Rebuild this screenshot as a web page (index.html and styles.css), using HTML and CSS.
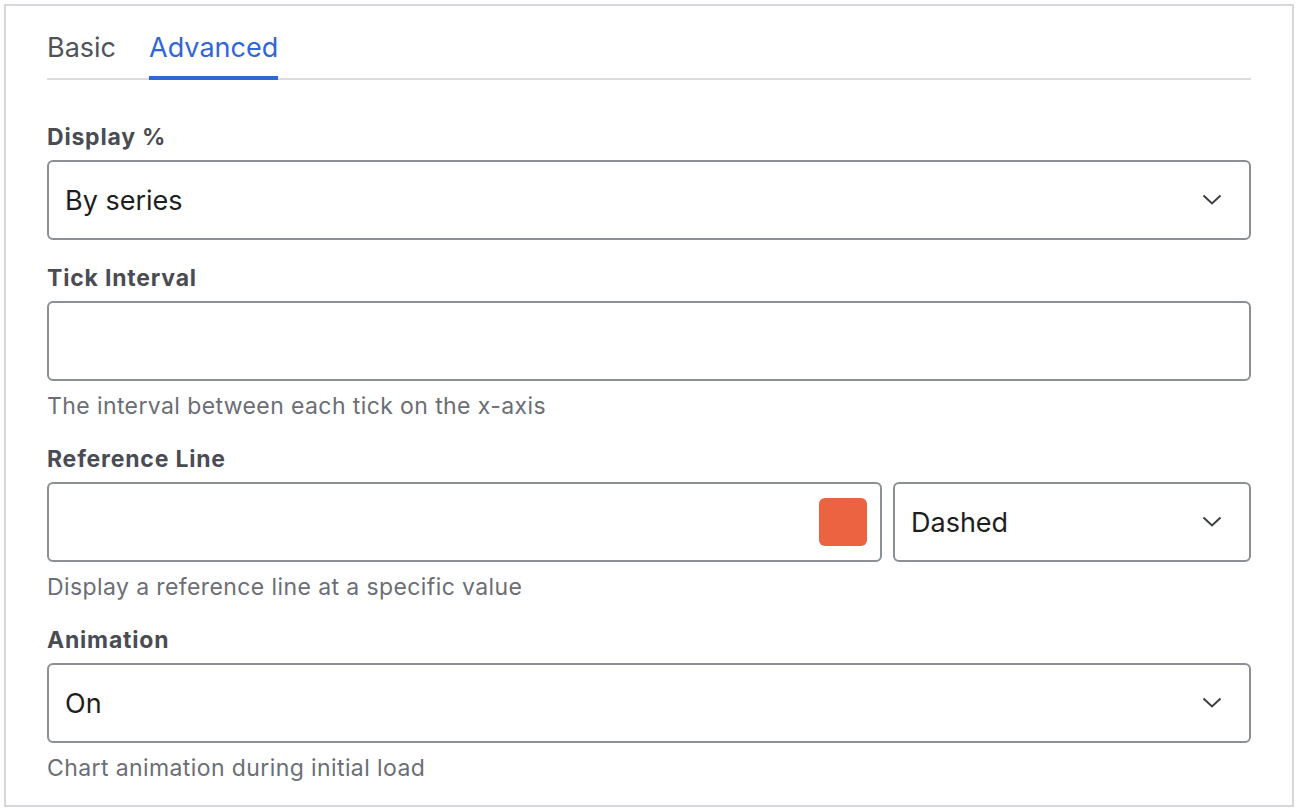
FILE: index.html
```html
<!doctype html>
<html lang="en">
	<head>
		<meta charset="UTF-8" />
		<title>Chart settings</title>
		<link rel="stylesheet" href="styles.css">
	</head>
	<body>
		<div class="panel">
			<div class="tabs">
				<span class="tab">Basic</span>
				<span class="tab active">Advanced</span>
			</div>

			<div class="field">
				<label class="label">Display %</label>
				<div class="control select">
					<span class="value">By series</span>
					<svg class="chevron" viewBox="0 0 20 12" width="20" height="12"><path d="M1.5 1.5 L10 9.5 L18.5 1.5" /></svg>
				</div>
			</div>

			<div class="field">
				<label class="label">Tick Interval</label>
				<div class="control"></div>
				<p class="help">The interval between each tick on the x-axis</p>
			</div>

			<div class="field">
				<label class="label">Reference Line</label>
				<div class="row">
					<div class="control grow">
						<span class="swatch"></span>
					</div>
					<div class="control select style-select">
						<span class="value">Dashed</span>
						<svg class="chevron" viewBox="0 0 20 12" width="20" height="12"><path d="M1.5 1.5 L10 9.5 L18.5 1.5" /></svg>
					</div>
				</div>
				<p class="help">Display a reference line at a specific value</p>
			</div>

			<div class="field">
				<label class="label">Animation</label>
				<div class="control select">
					<span class="value">On</span>
					<svg class="chevron" viewBox="0 0 20 12" width="20" height="12"><path d="M1.5 1.5 L10 9.5 L18.5 1.5" /></svg>
				</div>
				<p class="help">Chart animation during initial load</p>
			</div>
		</div>
	</body>
</html>
```

FILE: styles.css
```css
* {
	margin: 0;
	padding: 0;
	box-sizing: border-box;
}
body {
	background: #fff;
	font-family: Inter, "Noto Sans", sans-serif;
	color: #1e1e1e;
}
.panel {
	margin: 4px;
	width: 1290px;
	height: 803px;
	border: 2px solid #d5d7dc;
	padding: 0 41px;
}
.tabs {
	display: flex;
	gap: 33px;
	border-bottom: 2px solid #dcdcde;
	padding-top: 26px;
	margin-bottom: 43px;
}
.tab {
	font-size: 27px;
	line-height: 32px;
	color: #50535a;
	padding-bottom: 12px;
	margin-bottom: -2px;
	border-bottom: 4px solid transparent;
}
.tab.active {
	color: #3066d6;
	border-bottom-color: #3066d6;
}
.field {
	display: flex;
	flex-direction: column;
	margin-bottom: 24px;
}
.label {
	display: block;
	font-size: 23px;
	font-weight: 700;
	letter-spacing: 0.8px;
	line-height: 28px;
	color: #4a4c53;
	margin-bottom: 9px;
}
.control {
	height: 80px;
	border: 2px solid #8c8f94;
	border-radius: 6px;
	display: flex;
	align-items: center;
	padding: 0 16px;
}
.select {
	justify-content: space-between;
}
.value {
	font-size: 27px;
	color: #1e1e1e;
}
.chevron {
	fill: none;
	stroke: #3c3f45;
	stroke-width: 2;
	margin-right: 11px;
}
.row {
	display: flex;
	gap: 11px;
}
.grow {
	flex: 1;
	justify-content: flex-end;
	padding-right: 13px;
}
.swatch {
	width: 48px;
	height: 48px;
	border-radius: 6px;
	background: #ec6341;
}
.style-select {
	width: 358px;
}
.help {
	font-size: 23px;
	letter-spacing: 0.4px;
	line-height: 28px;
	color: #6b6e76;
	margin-top: 11px;
	margin-bottom: 1px;
}
```
